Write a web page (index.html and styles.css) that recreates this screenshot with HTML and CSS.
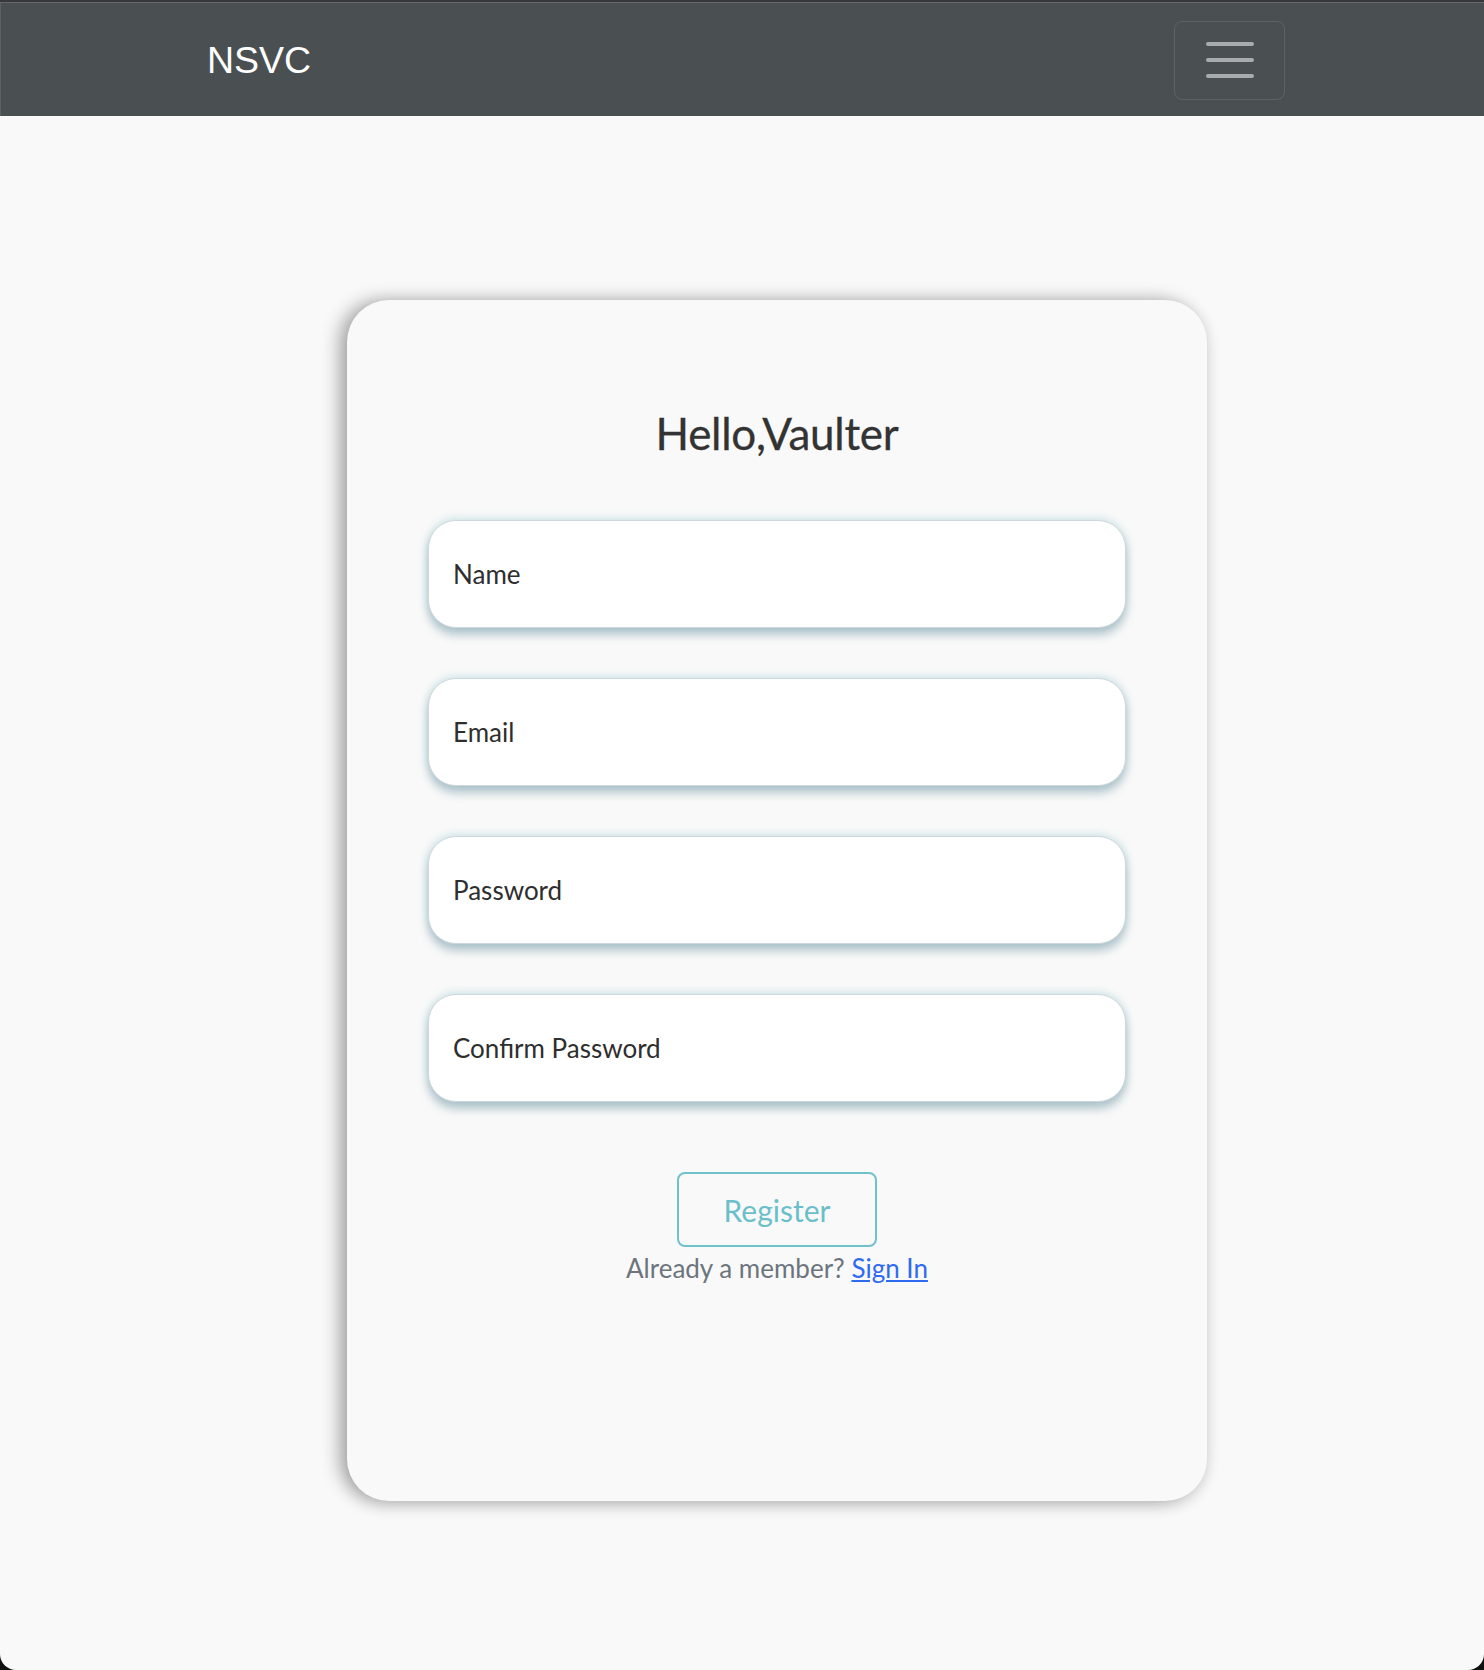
FILE: index.html
```html
<!DOCTYPE html>
<html lang="en">
<head>
<meta charset="utf-8">
<title>NSVC - Register</title>
<link rel="stylesheet" href="styles.css">
</head>
<body>
<div class="window">
  <nav class="navbar">
    <a class="brand" href="#">NSVC</a>
    <button class="toggler" type="button" aria-label="Toggle navigation">
      <span class="bar"></span>
      <span class="bar"></span>
      <span class="bar"></span>
    </button>
  </nav>
  <main class="main">
    <section class="card">
      <h1 class="title">Hello,Vaulter</h1>
      <form class="form">
        <input class="field" type="text" placeholder="Name">
        <input class="field" type="email" placeholder="Email">
        <input class="field" type="password" placeholder="Password">
        <input class="field" type="password" placeholder="Confirm Password">
        <button class="register" type="button">Register</button>
        <p class="member">Already a member? <a href="#" class="signin">Sign In</a></p>
      </form>
    </section>
  </main>
</div>
</body>
</html>
```

FILE: styles.css
```css
html, body {
  margin: 0;
  padding: 0;
  background: #111;
}

.window {
  width: 1484px;
  height: 1670px;
  background: #f9f9f9;
  border-bottom-left-radius: 16px;
  border-bottom-right-radius: 16px;
  overflow: hidden;
  font-family: Lato, "Open Sans", sans-serif;
}

.navbar {
  height: 114px;
  background: #4a4f52;
  border-top: 2px solid #363839;
  box-shadow: inset 0 1px 0 #62676a, inset 1px 0 0 #5c6164;
  display: flex;
  align-items: center;
  justify-content: space-between;
  padding: 0 199px 0 207px;
}

.brand {
  font-family: "Liberation Sans", Arial, sans-serif;
  font-size: 37.5px;
  color: #fff;
  text-decoration: none;
  margin-top: 2px;
}

.toggler {
  width: 111px;
  height: 79px;
  margin-top: 2px;
  border: 1.5px solid #5d6265;
  border-radius: 8px;
  background: transparent;
  display: flex;
  flex-direction: column;
  align-items: center;
  justify-content: center;
  gap: 12.5px;
  padding: 0;
}

.bar {
  display: block;
  width: 48px;
  height: 3.5px;
  border-radius: 2px;
  background: #a9acad;
}

.main {
  padding: 184px 0 0 347px;
}

.card {
  width: 860px;
  height: 1201px;
  box-sizing: border-box;
  background: #f9f9f9;
  border-radius: 42px;
  box-shadow: -8px 0 18px rgba(0, 0, 0, 0.3), 0 4px 16px rgba(0, 0, 0, 0.1);
  padding: 108px 81px 0;
}

.title {
  margin: 0;
  text-align: center;
  font-weight: 400;
  font-size: 44px;
  line-height: 50px;
  color: #333;
  letter-spacing: -0.3px;
  -webkit-text-stroke: 0.3px #333;
}

.form {
  margin-top: 62px;
  display: flex;
  flex-direction: column;
  align-items: center;
}

.field {
  width: 698px;
  height: 108px;
  box-sizing: border-box;
  border: 1px solid #cdd8dc;
  border-radius: 28px;
  background: #fff;
  padding: 0 24px;
  font-family: Lato, "Open Sans", sans-serif;
  font-size: 26px;
  color: #333;
  margin-bottom: 50px;
  box-shadow: 0 7px 10px rgba(90, 135, 150, 0.45), 0 -2px 8px rgba(120, 185, 200, 0.3);
  outline: none;
}

.field::placeholder {
  color: #2e2e2e;
  opacity: 1;
}

.field:last-of-type {
  margin-bottom: 0;
}

.register {
  margin-top: 70px;
  width: 200px;
  height: 75px;
  border: 2px solid #6fc2cc;
  border-radius: 8px;
  background: transparent;
  color: #6bbfca;
  font-family: Lato, "Open Sans", sans-serif;
  font-size: 30px;
  padding: 0;
}

.member {
  margin: 6px 0 0;
  font-size: 26px;
  line-height: 30px;
  color: #6c757d;
}

.signin {
  color: #2f6bf0;
  text-decoration: underline;
}
```
